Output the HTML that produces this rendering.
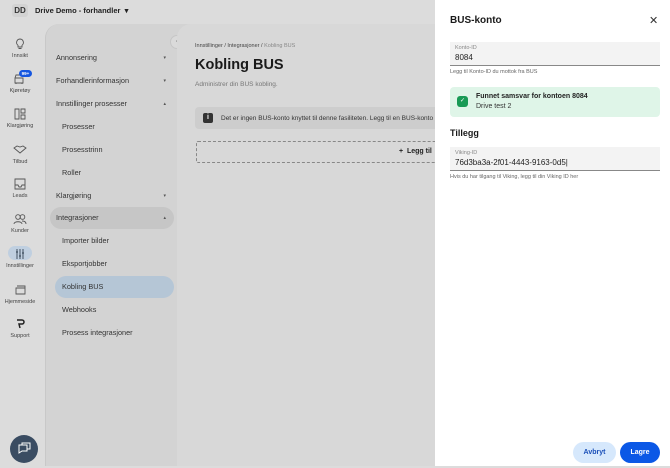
<!DOCTYPE html>
<html><head><style>
*{box-sizing:border-box;margin:0;padding:0}
body{width:670px;height:466px;overflow:hidden;background:#dcdcdc;font-family:"Liberation Sans",sans-serif;position:relative;color:#1a1a1a}
.top{position:absolute;left:0;top:0;height:22px;width:670px}
.dd{position:absolute;left:12px;top:4px;width:16px;height:13px;font-size:8px;font-weight:bold;color:#333;text-align:center;line-height:13px;background:#d2d2d2;border-radius:3px}
.org{position:absolute;left:35px;top:6px;font-size:7.5px;font-weight:bold;color:#222}
.rail .it{position:absolute;left:0;width:40px;text-align:center;font-size:5.5px;color:#444}
.rail .ic{display:block;margin:0 auto 3px;width:14px;height:12px}
.nav{position:absolute;left:45px;top:24px;width:150px;height:442px;background:#d3d3d3;border-radius:14px 0 0 0;border-left:1px solid #c8c8c8}
.nav .r{position:absolute;left:10px;width:118px;height:22px;line-height:22px;font-size:7.3px;color:#333;padding-left:0}
.nav .r b{position:absolute;right:8px;top:0;font-size:5px;color:#555;font-weight:normal}
.main{position:absolute;left:177px;top:24px;width:300px;height:442px;background:#d8d8d8;border-radius:14px 0 0 0}
.drawer{position:absolute;left:435px;top:0;width:235px;height:466px;background:#fff}
.fld{position:absolute;left:15px;width:210px;background:#f3f3f3;border-bottom:1px solid #888}
</style></head><body>
<div class="top"><div class="dd">DD</div><div class="org">Drive Demo - forhandler &nbsp;▾</div></div>
<div class="rail">
<div class="it" style="top:38px"><svg class="ic" viewBox="0 0 14 12"><path d="M7 1a3.5 3.5 0 0 0-2 6.3V9h4V7.3A3.5 3.5 0 0 0 7 1zM5.5 10.5h3" fill="none" stroke="#555" stroke-width=".9"/></svg>Innsikt</div>
<div class="it" style="top:73px"><svg class="ic" viewBox="0 0 14 12"><path d="M2 5h8v5H2zM3 10v1M9 10v1M2 5l1-3h6" fill="none" stroke="#555" stroke-width=".9"/></svg>Kjøretøy</div>
<div style="position:absolute;left:19px;top:70px;width:13px;height:7px;background:#1556e0;border-radius:4px;color:#fff;font-size:4.5px;text-align:center;line-height:7px;font-weight:bold">99+</div>
<div class="it" style="top:108px"><svg class="ic" viewBox="0 0 14 12"><path d="M2 1h4v10H2zM8 1h4v4H8zM8 7h4v4H8z" fill="none" stroke="#555" stroke-width=".9"/></svg>Klargjøring</div>
<div class="it" style="top:144px"><svg class="ic" viewBox="0 0 14 12"><path d="M1 4l3-2 3 1 3-1 3 2-6 5z" fill="none" stroke="#555" stroke-width=".9"/></svg>Tilbud</div>
<div class="it" style="top:178px"><svg class="ic" viewBox="0 0 14 12"><path d="M2 1h10v10H2zM2 7h3l1 2h2l1-2h3" fill="none" stroke="#555" stroke-width=".9"/></svg>Leads</div>
<div class="it" style="top:213px"><svg class="ic" viewBox="0 0 14 12"><circle cx="5" cy="4" r="2.3" fill="none" stroke="#555" stroke-width=".9"/><circle cx="9.5" cy="4" r="2.3" fill="none" stroke="#555" stroke-width=".9"/><path d="M1 11c0-3 8-3 8 0M9 8c3 0 4 1 4 3" fill="none" stroke="#555" stroke-width=".9"/></svg>Kunder</div>
<div style="position:absolute;left:8px;top:246px;width:24px;height:14px;background:#bfcfe0;border-radius:7px"></div>
<div class="it" style="top:248px"><svg class="ic" viewBox="0 0 14 12"><path d="M4 1v10M7 1v10M10 1v10M3 4h2M6 8h2M9 5h2" fill="none" stroke="#345" stroke-width=".9"/></svg>Innstillinger</div>
<div class="it" style="top:284px"><svg class="ic" viewBox="0 0 14 12"><path d="M3 4h9v6H3zM4 2h8v2" fill="none" stroke="#555" stroke-width=".9"/></svg>Hjemmeside</div>
<div class="it" style="top:318px"><svg class="ic" viewBox="0 0 14 12"><path d="M4 2h5a2 2 0 0 1 0 4H6l1 4" fill="none" stroke="#222" stroke-width="1.5"/></svg>Support</div>
<div style="position:absolute;left:10px;top:435px;width:28px;height:28px;border-radius:50%;background:#3a4c62"><svg width="28" height="28" viewBox="0 0 28 28"><path d="M9 10h8v6h-5l-3 2zM12 10V8h8v6h-3" fill="none" stroke="#fff" stroke-width="1"/></svg></div>
</div>
<div class="nav">
<div class="r" style="top:23px">Annonsering<b>▾</b></div>
<div class="r" style="top:46px">Forhandlerinformasjon<b>▾</b></div>
<div class="r" style="top:69px">Innstillinger prosesser<b>▴</b></div>
<div class="r" style="top:92px;left:16px">Prosesser</div>
<div class="r" style="top:115px;left:16px">Prosesstrinn</div>
<div class="r" style="top:138px;left:16px">Roller</div>
<div class="r" style="top:161px">Klargjøring<b>▾</b></div>
<div style="position:absolute;left:4px;top:183px;width:124px;height:22px;background:#c6c6c6;border-radius:11px"></div>
<div class="r" style="top:183px">Integrasjoner<b>▴</b></div>
<div class="r" style="top:206px;left:16px">Importer bilder</div>
<div class="r" style="top:229px;left:16px">Eksportjobber</div>
<div style="position:absolute;left:9px;top:252px;width:119px;height:22px;background:#b5c6d6;border-radius:11px"></div>
<div class="r" style="top:252px;left:16px">Kobling BUS</div>
<div class="r" style="top:275px;left:16px">Webhooks</div>
<div class="r" style="top:298px;left:16px">Prosess integrasjoner</div>
</div>
<div style="position:absolute;left:170px;top:35px;width:14px;height:14px;border-radius:50%;background:#dadada;border:1px solid #c6c6c6;font-size:7px;color:#777;text-align:center;line-height:12px">‹</div>
<div class="main">
<div style="position:absolute;left:18px;top:19px;font-size:5.5px;color:#444">Innstillinger / Integrasjoner / <span style="color:#888">Kobling BUS</span></div>
<div style="position:absolute;left:18px;top:33px;font-size:14.5px;font-weight:bold;color:#1a1a1a">Kobling BUS</div>
<div style="position:absolute;left:18px;top:57px;font-size:6.5px;color:#777">Administrer din BUS kobling.</div>
<div style="position:absolute;left:18px;top:83px;width:290px;height:22px;background:#cdcdcd;border-radius:4px"></div>
<div style="position:absolute;left:26px;top:89px;width:10px;height:10px;background:#333;border-radius:2px;color:#fff;font-size:7px;font-weight:bold;text-align:center;line-height:10px">i</div>
<div style="position:absolute;left:44px;top:91px;font-size:6.5px;color:#333;white-space:nowrap">Det er ingen BUS-konto knyttet til denne fasiliteten. Legg til en BUS-konto</div>
<div style="position:absolute;left:19px;top:117px;width:290px;height:22px;border:1px dashed #888;border-radius:2px"></div>
<div style="position:absolute;left:222px;top:124px;font-size:7px;font-weight:bold;color:#222;white-space:nowrap">+&nbsp; Legg til</div>
</div>
<div class="drawer">
<div style="position:absolute;left:15px;top:15px;font-size:10px;font-weight:bold">BUS-konto</div>
<div style="position:absolute;left:214px;top:14px;font-size:11px;color:#333">✕</div>
<div class="fld" style="top:42px;height:24px"><div style="position:absolute;left:5px;top:3px;font-size:5.5px;color:#888">Konto-ID</div><div style="position:absolute;left:5px;top:11px;font-size:8px;color:#222">8084</div></div>
<div style="position:absolute;left:15px;top:69px;font-size:5.5px;color:#666">Legg til Konto-ID du mottok fra BUS</div>
<div style="position:absolute;left:15px;top:87px;width:210px;height:30px;background:#dff5e8;border-radius:4px"></div>
<div style="position:absolute;left:22px;top:96px;width:11px;height:11px;background:#189a55;border-radius:3px;color:#fff;font-size:6px;text-align:center;line-height:11px">✓</div>
<div style="position:absolute;left:41px;top:93px;font-size:7px;font-weight:bold;color:#222">Funnet samsvar for kontoen 8084</div>
<div style="position:absolute;left:41px;top:103px;font-size:7px;color:#333">Drive test 2</div>
<div style="position:absolute;left:15px;top:128px;font-size:9px;font-weight:bold">Tillegg</div>
<div class="fld" style="top:147px;height:24px"><div style="position:absolute;left:5px;top:3px;font-size:5.5px;color:#888">Viking-ID</div><div style="position:absolute;left:5px;top:11px;font-size:8px;color:#222">76d3ba3a-2f01-4443-9163-0d5|</div></div>
<div style="position:absolute;left:15px;top:174px;font-size:5.5px;color:#666">Hvis du har tilgang til Viking, legg til din Viking ID her</div>
<div style="position:absolute;left:138px;top:442px;width:43px;height:21px;border-radius:11px;background:#d6e8fc;color:#1a4fb8;font-size:7px;font-weight:bold;text-align:center;line-height:21px">Avbryt</div>
<div style="position:absolute;left:185px;top:442px;width:40px;height:21px;border-radius:11px;background:#0b58e6;color:#fff;font-size:7px;font-weight:bold;text-align:center;line-height:21px">Lagre</div>
</div>
</body></html>
